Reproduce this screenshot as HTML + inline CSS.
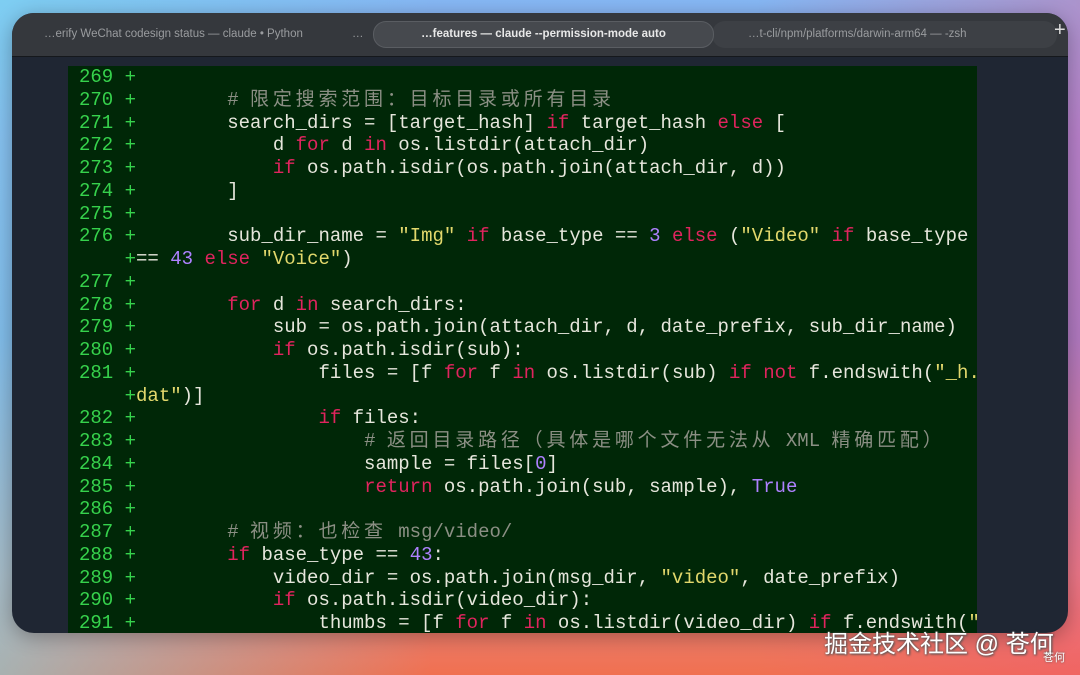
<!DOCTYPE html>
<html><head><meta charset="utf-8"><style>
*{margin:0;padding:0;box-sizing:border-box}
html,body{width:1080px;height:675px;overflow:hidden}
body{position:relative;background:linear-gradient(180deg,#86b8f4 0%,#9a9af0 20%,#8f8fe0 50%,#e88a8a 85%,#f07050 100%);font-family:"Liberation Sans",sans-serif}
.bgl{position:absolute;inset:0;background:linear-gradient(90deg,rgba(120,220,240,.6) 0%,rgba(120,220,240,0) 40%,rgba(240,80,130,0) 70%,rgba(240,80,130,.35) 100%)}
.win{position:absolute;left:12px;top:13px;width:1056px;height:620px;border-radius:22px;background:#1f2633;overflow:hidden;box-shadow:0 4px 20px rgba(0,0,0,.3)}
.tabs{position:absolute;left:0;top:0;width:100%;height:44px;background:#35383d;border-bottom:1px solid #15181c}
.tab{position:absolute;top:0;height:44px;line-height:42px;font-size:11.5px;color:#9a9c9f;white-space:nowrap}
.act{position:absolute;left:361px;top:8px;width:341px;height:27px;border-radius:13px;background:#46494e;border:1px solid #5a5d62;color:#e8e8e8;font-weight:bold;font-size:11.5px;text-align:center;line-height:25px}
.tab3bg{position:absolute;left:700px;top:8px;width:345px;height:27px;border-radius:13px;background:#3d4045}
.plus{position:absolute;left:1042px;top:6px;color:#ddd;font-size:20px}
.code{position:absolute;left:56px;top:53px;width:909px;height:567px;background:#002707;overflow:hidden}
pre{position:absolute;left:11px;top:0;font-family:"Liberation Mono","Noto Sans CJK SC",monospace;font-size:19px;line-height:22.75px;color:#e6e6dc;white-space:pre}
.n{color:#36d24c}.k{color:#e0245e}.s{color:#e2d86c}.m{color:#ae81ff}.c{color:#8b8f84}
.cj{letter-spacing:3.8px}
.wm{position:absolute;left:824px;top:624px;font-family:"Liberation Sans","Noto Sans CJK SC",sans-serif;font-size:24px;color:#fff;text-shadow:0 0 2px #555,1px 1px 2px #555;white-space:nowrap}
.wm2{position:absolute;left:1043px;top:649px;font-family:"Noto Sans CJK SC",sans-serif;font-size:11px;color:#fff;text-shadow:0 0 2px #555}
</style></head><body>
<div class="bgl"></div>
<div class="win">
<div class="tabs">
<div class="tab" style="left:32px">…erify WeChat codesign status — claude • Python</div>
<div class="tab" style="left:340px">…</div>
<div class="tab3bg"></div>
<div class="act">…features — claude --permission-mode auto</div>
<div class="tab" style="left:736px">…t-cli/npm/platforms/darwin-arm64 — -zsh</div>
<div class="plus">+</div>
</div>
<div class="code"><pre><span class="n">269 +</span>
<span class="n">270 +</span>        <span class="c"># <span class="cj">限定搜索范围：目标目录或所有目录</span></span>
<span class="n">271 +</span>        search_dirs = [target_hash] <span class="k">if</span> target_hash <span class="k">else</span> [
<span class="n">272 +</span>            d <span class="k">for</span> d <span class="k">in</span> os.listdir(attach_dir)
<span class="n">273 +</span>            <span class="k">if</span> os.path.isdir(os.path.join(attach_dir, d))
<span class="n">274 +</span>        ]
<span class="n">275 +</span>
<span class="n">276 +</span>        sub_dir_name = <span class="s">"Img"</span> <span class="k">if</span> base_type == <span class="m">3</span> <span class="k">else</span> (<span class="s">"Video"</span> <span class="k">if</span> base_type
    <span class="n">+</span>== <span class="m">43</span> <span class="k">else</span> <span class="s">"Voice"</span>)
<span class="n">277 +</span>
<span class="n">278 +</span>        <span class="k">for</span> d <span class="k">in</span> search_dirs:
<span class="n">279 +</span>            sub = os.path.join(attach_dir, d, date_prefix, sub_dir_name)
<span class="n">280 +</span>            <span class="k">if</span> os.path.isdir(sub):
<span class="n">281 +</span>                files = [f <span class="k">for</span> f <span class="k">in</span> os.listdir(sub) <span class="k">if</span> <span class="k">not</span> f.endswith(<span class="s">"_h.</span>
    <span class="n">+</span><span class="s">dat"</span>)]
<span class="n">282 +</span>                <span class="k">if</span> files:
<span class="n">283 +</span>                    <span class="c"># <span class="cj">返回目录路径（具体是哪个文件无法从</span> XML <span class="cj">精确匹配）</span></span>
<span class="n">284 +</span>                    sample = files[<span class="m">0</span>]
<span class="n">285 +</span>                    <span class="k">return</span> os.path.join(sub, sample), <span class="m">True</span>
<span class="n">286 +</span>
<span class="n">287 +</span>        <span class="c"># <span class="cj">视频：也检查</span> msg/video/</span>
<span class="n">288 +</span>        <span class="k">if</span> base_type == <span class="m">43</span>:
<span class="n">289 +</span>            video_dir = os.path.join(msg_dir, <span class="s">"video"</span>, date_prefix)
<span class="n">290 +</span>            <span class="k">if</span> os.path.isdir(video_dir):
<span class="n">291 +</span>                thumbs = [f <span class="k">for</span> f <span class="k">in</span> os.listdir(video_dir) <span class="k">if</span> f.endswith(<span class="s">"</span></pre></div>
</div>
<div class="wm">掘金技术社区 @ 苍何</div>
<div class="wm2">苍何</div>
</body></html>
